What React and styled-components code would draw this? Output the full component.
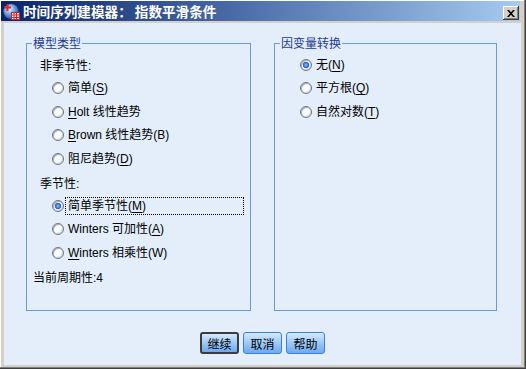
import { createGlobalStyle, styled, css } from "styled-components";

const GlobalStyle = createGlobalStyle`
  html, body {
    margin: 0;
    padding: 0;
    background: #ffffff;
  }
  body {
    font-family: "Liberation Sans", "Noto Sans CJK SC", sans-serif;
    font-size: 12px;
    color: #000;
  }
`;

const leftRows = [
  { kind: "label", text: "非季节性:" },
  { kind: "radio", parts: ["简单(", "S", ")"] },
  { kind: "radio", parts: ["", "H", "olt 线性趋势"] },
  { kind: "radio", parts: ["", "B", "rown 线性趋势(B)"] },
  { kind: "radio", parts: ["阻尼趋势(", "D", ")"] },
  { kind: "label", text: "季节性:" },
  { kind: "radio", parts: ["简单季节性(", "M", ")"], checked: true, focused: true },
  { kind: "radio", parts: ["Winters 可加性(", "A", ")"] },
  { kind: "radio", parts: ["", "W", "inters 相乘性(W)"] },
  { kind: "note", text: "当前周期性:4" },
];

const rightRows = [
  { kind: "radio", parts: ["无(", "N", ")"], checked: true },
  { kind: "radio", parts: ["平方根(", "Q", ")"] },
  { kind: "radio", parts: ["自然对数(", "T", ")"] },
];

const AppIcon = () => (
  <svg width="17" height="17" viewBox="0 0 17 17">
    <defs>
      <radialGradient id="globe" cx="0.4" cy="0.35" r="0.7">
        <stop offset="0" stopColor="#e8f2ff" />
        <stop offset="0.5" stopColor="#6fa0dc" />
        <stop offset="1" stopColor="#1d4f9c" />
      </radialGradient>
    </defs>
    <circle cx="8" cy="8.5" r="7.5" fill="url(#globe)" />
    <path d="M1 4.5h7M4.5 1v7" stroke="#e0202a" strokeWidth="2" />
    <rect x="8.5" y="9.5" width="8" height="7" fill="#fff" stroke="#d0202a" />
    <path d="M8.5 12h8M8.5 14.5h8M11 9.5v7M13.5 9.5v7" stroke="#d0202a" strokeWidth="1" />
  </svg>
);

const Mnemonic = ({ parts }) => (
  <>
    {parts[0]}
    <u>{parts[1]}</u>
    {parts[2]}
  </>
);

const Row = ({ row }) => {
  if (row.kind === "label") return <SectionLabel>{row.text}</SectionLabel>;
  if (row.kind === "note") return <NoteLabel>{row.text}</NoteLabel>;
  return (
    <RadioRow>
      <RadioDot $checked={row.checked} />
      <RadioText $focused={row.focused}>
        <Mnemonic parts={row.parts} />
      </RadioText>
    </RadioRow>
  );
};

const App = () => {
  return (
    <>
      <GlobalStyle />
      <Window>
        <TitleBar>
          <AppIcon />
          <TitleText>时间序列建模器： 指数平滑条件</TitleText>
          <CloseButton>
            <svg width="8" height="7" viewBox="0 0 8 7">
              <path d="M0 0h2l2 2.2L6 0h2L5 3.5 8 7H6L4 4.8 2 7H0l3-3.5z" fill="#000" />
            </svg>
          </CloseButton>
        </TitleBar>
        <Body>
          <Groups>
            <GroupBox>
              <Legend>模型类型</Legend>
              <Rows>
                {leftRows.map((row, i) => (
                  <Row key={i} row={row} />
                ))}
              </Rows>
            </GroupBox>
            <GroupBox>
              <Legend>因变量转换</Legend>
              <Rows>
                {rightRows.map((row, i) => (
                  <Row key={i} row={row} />
                ))}
              </Rows>
            </GroupBox>
          </Groups>
          <ButtonBar>
            <Button $default>继续</Button>
            <Button>取消</Button>
            <Button>帮助</Button>
          </ButtonBar>
        </Body>
      </Window>
    </>
  );
};

const Window = styled.div`
  width: 526px;
  height: 369px;
  box-sizing: border-box;
  padding: 1px;
  background: #d4d0c8;
  box-shadow: inset -1px -1px #404040, inset -2px -2px #808080, inset 1px 1px #ffffff;
  display: flex;
  flex-direction: column;
`;

const TitleBar = styled.div`
  height: 20px;
  margin-right: 5px;
  display: flex;
  align-items: center;
  gap: 3px;
  padding-left: 2px;
  background: linear-gradient(to right, #0a246a 0%, #3a5a9a 35%, #a6caf0 100%);
`;

const TitleText = styled.span`
  color: #ffffff;
  font-family: "Noto Sans CJK SC", sans-serif;
  font-weight: bold;
  font-size: 13.6px;
  line-height: 20px;
`;

const CloseButton = styled.div`
  margin-left: auto;
  margin-right: 1px;
  align-self: flex-end;
  margin-bottom: 1px;
  width: 16px;
  height: 14px;
  box-sizing: border-box;
  background: #d4d0c8;
  box-shadow: inset -1px -1px #404040, inset 1px 1px #ffffff, inset -2px -2px #808080;
  display: flex;
  align-items: center;
  justify-content: center;
`;

const Body = styled.div`
  flex: 1;
  margin: 2px 4px 3px 3px;
  background: #e3eefa;
  padding: 20px 0 0 22px;
  display: flex;
  flex-direction: column;
`;

const Groups = styled.div`
  display: grid;
  grid-template-columns: 225px 223px;
  gap: 23px;
  height: 268px;
`;

const GroupBox = styled.div`
  position: relative;
  border: 1px solid #6b9bd3;
  padding-left: 6px;
`;

const Legend = styled.span`
  position: absolute;
  top: -8px;
  left: 5px;
  padding: 0 1px;
  background: #e3eefa;
  color: #1f3a93;
  font-family: "Noto Sans CJK SC", sans-serif;
  font-size: 12px;
  line-height: 14px;
`;

const Rows = styled.div`
  padding-top: 9px;
  display: flex;
  flex-direction: column;
`;

const rowBase = css`
  height: 23.5px;
  display: flex;
  align-items: center;
  white-space: nowrap;
`;

const SectionLabel = styled.div`
  ${rowBase};
  padding-left: 7px;
`;

const NoteLabel = styled.div`
  ${rowBase};
`;

const RadioRow = styled.div`
  ${rowBase};
  padding-left: 19px;
  padding-right: 6px;
`;

const RadioDot = styled.span`
  flex: none;
  width: 12px;
  height: 12px;
  border-radius: 50%;
  box-sizing: border-box;
  border: 1px solid #6e7580;
  background: ${(p) =>
    p.$checked
      ? "radial-gradient(circle, #8cc0f6 0, #1f64d0 2.8px, #f4f8ff 3.6px, #dfe8f6 100%)"
      : "radial-gradient(circle, #ffffff 0, #ffffff 2.5px, #e2ecf8 100%)"};
  box-shadow: inset 1px 1px #a9b0ba, inset -1px -1px #d6dbe2;
`;

const RadioText = styled.span`
  flex: 1;
  height: 18px;
  line-height: 16px;
  box-sizing: border-box;
  padding: 0 2px;
  margin-left: 1px;
  border: 1px dotted ${(p) => (p.$focused ? "#000" : "transparent")};
  u {
    text-underline-offset: 2px;
  }
`;

const ButtonBar = styled.div`
  margin-top: 21px;
  margin-left: -22px;
  display: flex;
  justify-content: center;
  gap: 4px;
`;

const Button = styled.div`
  width: 39px;
  height: 22px;
  box-sizing: border-box;
  border-radius: 3px;
  border: ${(p) => (p.$default ? "2px solid #3c3c3c" : "1px solid #3a82d8")};
  background: linear-gradient(#d6e9fc, #a2cbf6 45%, #6ea9ec);
  font-family: "Noto Sans CJK SC", sans-serif;
  font-size: 12px;
  display: flex;
  align-items: center;
  justify-content: center;
`;

export default App;
